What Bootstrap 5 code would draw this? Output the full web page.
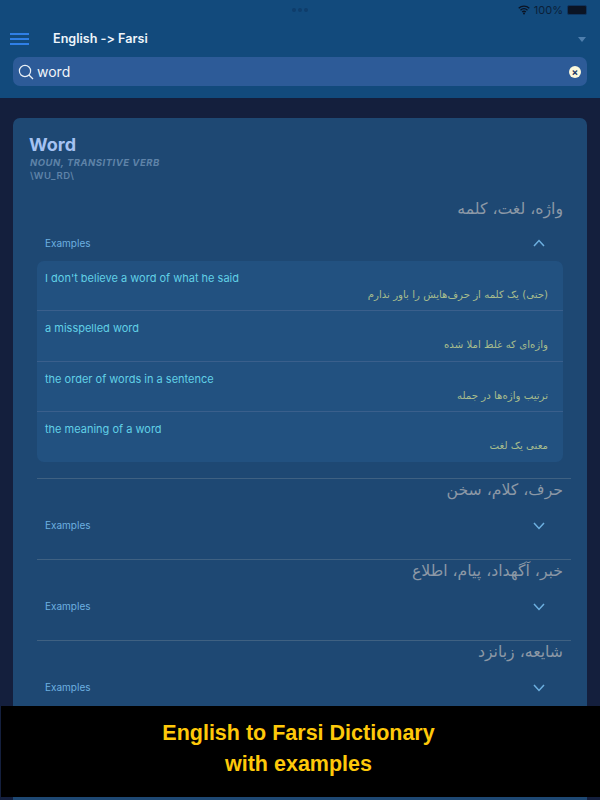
<!DOCTYPE html>
<html lang="en">
<head>
  <meta charset="UTF-8">
  <meta name="viewport" content="width=device-width, initial-scale=1.0">
  <title>English to Farsi Dictionary</title>
  <link href="https://cdn.jsdelivr.net/npm/bootstrap@5.3.0/dist/css/bootstrap.min.css" rel="stylesheet">
  <style>
    html, body { height: 800px; overflow: hidden; }
    body { background: #141f3d; font-family: Inter, "Liberation Sans", sans-serif; position: relative; }
    .top-head { background: #124a7c; height: 98px; padding: 0 13px; }
    .status-row { height: 20px; color: #0b1f38; font-size: 11px; position: relative; }
    .status-dots { position: absolute; left: 279px; top: 8px; gap: 2px; }
    .status-dots i { width: 4px; height: 4px; border-radius: 50%; background: #0f3d6b; display: block; }
    .batt { width: 20px; height: 10px; background: #0b1424; border: 1px solid #0f3560; border-radius: 2px; }
    .title-row { height: 37px; padding-top: 1px; }
    .menu-btn { width: 19px; margin-left: -3px; }
    .menu-btn i { display: block; height: 2px; background: #2f7fe6; margin-bottom: 3px; }
    .menu-btn i:last-child { margin-bottom: 0; }
    .head-title { color: #eef5fb; font-size: 12.6px; font-weight: 600; margin-left: 24px; font-variant-ligatures: none; font-feature-settings: "calt" 0; }
    .caret-down { width: 0; height: 0; border-left: 4px solid transparent; border-right: 4px solid transparent; border-top: 5px solid #4f7fae; margin-right: 1px; }
    .search-box { background: #2d5b98; height: 29px; border-radius: 7px; color: #f1f5f8; font-size: 14px; padding: 0 6px 0 5px; gap: 3px; }
    .clear-btn { width: 12px; height: 12px; border-radius: 50%; background: #fbf8dc; color: #1d3b66; font-size: 10px; line-height: 12px; text-align: center; font-weight: 700; }
    .entry-card { background: #1e4873; margin: 20px 13px 0; height: 700px; border-radius: 7px; padding: 16px 24px 0; }
    .entry-word { color: #a5c2f2; font-size: 18px; font-weight: 700; line-height: 22px; margin-left: -8px; }
    .entry-pos { color: #5f83a8; font-size: 9.5px; font-weight: 700; font-style: italic; letter-spacing: .5px; line-height: 12px; margin: 1px 0 0 -7px; }
    .entry-pron { color: #5f83a8; font-size: 9.5px; font-weight: 600; letter-spacing: .6px; line-height: 12px; margin: 1px 0 0 -7px; }
    .fa-head { font-family: "DejaVu Sans", sans-serif; color: #8c98a6; font-size: 15.7px; line-height: 22px; }
    .first-head { margin-top: 16px; }
    .examples-row { height: 38px; padding: 2px 18px 0 8px; color: #6db0e0; font-size: 10px; margin-top: 3px; }
    .examples-box { background: #225180; border-radius: 7px; }
    .example-item { height: 50.3px; padding: 10px 15px 0 8px; border-bottom: 1px solid #3a5f8c; }
    .example-item:last-child { border-bottom: 0; }
    .example-en { color: #61d0e6; font-size: 11px; line-height: 14px; }
    .example-fa { font-family: "DejaVu Sans", sans-serif; color: #a7bd8e; font-size: 10.2px; line-height: 14px; margin-top: 3px; }
    .sense-block { margin-right: -8px; height: 81px; border-top: 1px solid #3f6182; padding-right: 8px; }
    .sense-block .examples-row { height: 45px; margin-top: 2px; padding-top: 0; }
    .first-sense { margin-top: 16px; }
    .promo-banner { position: absolute; left: 1px; right: 0; top: 706px; height: 91px; background: #000; color: #fec90a; font-family: "Liberation Sans", Arial, sans-serif; font-weight: 700; font-size: 21.5px; line-height: 31px; text-align: center; padding: 12px 4px 0 0; }
  </style>
</head>
<body>
  <div class="top-head">
    <div class="status-row d-flex align-items-center justify-content-end gap-1">
      <div class="status-dots d-flex"><i></i><i></i><i></i></div>
      <svg width="12" height="10" viewBox="0 0 12 10"><path d="M0.7 3.3a7.6 7.6 0 0 1 10.6 0M2.5 5.2a5 5 0 0 1 7 0M4.2 7a2.5 2.5 0 0 1 3.6 0" fill="none" stroke="#0b1424" stroke-width="1.3"/><circle cx="6" cy="8.6" r="1" fill="#0b1424"/></svg>
      <span>100%</span>
      <div class="batt"></div>
    </div>
    <div class="title-row d-flex align-items-center justify-content-between">
      <div class="d-flex align-items-center">
        <div class="menu-btn"><i></i><i></i><i></i></div>
        <div class="head-title">English -&gt; Farsi</div>
      </div>
      <div class="caret-down"></div>
    </div>
    <div class="search-box d-flex align-items-center">
      <svg width="16" height="16" viewBox="0 0 16 16"><circle cx="7" cy="7" r="5.6" fill="none" stroke="#eaf1f6" stroke-width="1.2"/><path d="M11 11l4 4" stroke="#eaf1f6" stroke-width="1.3"/></svg>
      <span class="flex-grow-1">word</span>
      <div class="clear-btn">×</div>
    </div>
  </div>

  <div class="entry-card">
    <div class="entry-word">Word</div>
    <div class="entry-pos">NOUN, TRANSITIVE VERB</div>
    <div class="entry-pron">\WU_RD\</div>
    <div class="fa-head first-head" dir="rtl" lang="fa">واژه، لغت، کلمه</div>
    <div class="examples-row d-flex align-items-center justify-content-between">
      <span>Examples</span>
      <svg width="12" height="8" viewBox="0 0 12 8"><path d="M1 7l5-5.5L11 7" fill="none" stroke="#6db0e0" stroke-width="1.5"/></svg>
    </div>
    <div class="examples-box">
      <div class="example-item">
        <div class="example-en">I don't believe a word of what he said</div>
        <div class="example-fa" dir="rtl" lang="fa">(حتی) یک کلمه از حرف‌هایش را باور ندارم</div>
      </div>
      <div class="example-item">
        <div class="example-en">a misspelled word</div>
        <div class="example-fa" dir="rtl" lang="fa">واژه‌ای که غلط املا شده</div>
      </div>
      <div class="example-item">
        <div class="example-en">the order of words in a sentence</div>
        <div class="example-fa" dir="rtl" lang="fa">ترتیب واژه‌ها در جمله</div>
      </div>
      <div class="example-item">
        <div class="example-en">the meaning of a word</div>
        <div class="example-fa" dir="rtl" lang="fa">معنی یک لغت</div>
      </div>
    </div>
    <div class="sense-block first-sense">
      <div class="fa-head" dir="rtl" lang="fa">حرف، کلام، سخن</div>
      <div class="examples-row d-flex align-items-center justify-content-between">
        <span>Examples</span>
        <svg width="12" height="8" viewBox="0 0 12 8"><path d="M1 1l5 5.5L11 1" fill="none" stroke="#6db0e0" stroke-width="1.5"/></svg>
      </div>
    </div>
    <div class="sense-block">
      <div class="fa-head" dir="rtl" lang="fa">خبر، آگهداد، پیام، اطلاع</div>
      <div class="examples-row d-flex align-items-center justify-content-between">
        <span>Examples</span>
        <svg width="12" height="8" viewBox="0 0 12 8"><path d="M1 1l5 5.5L11 1" fill="none" stroke="#6db0e0" stroke-width="1.5"/></svg>
      </div>
    </div>
    <div class="sense-block">
      <div class="fa-head" dir="rtl" lang="fa">شایعه، زبانزد</div>
      <div class="examples-row d-flex align-items-center justify-content-between">
        <span>Examples</span>
        <svg width="12" height="8" viewBox="0 0 12 8"><path d="M1 1l5 5.5L11 1" fill="none" stroke="#6db0e0" stroke-width="1.5"/></svg>
      </div>
    </div>
  </div>

  <div class="promo-banner">English to Farsi Dictionary<br>with examples</div>
  <script src="https://cdn.jsdelivr.net/npm/bootstrap@5.3.0/dist/js/bootstrap.bundle.min.js"></script>
</body>
</html>
